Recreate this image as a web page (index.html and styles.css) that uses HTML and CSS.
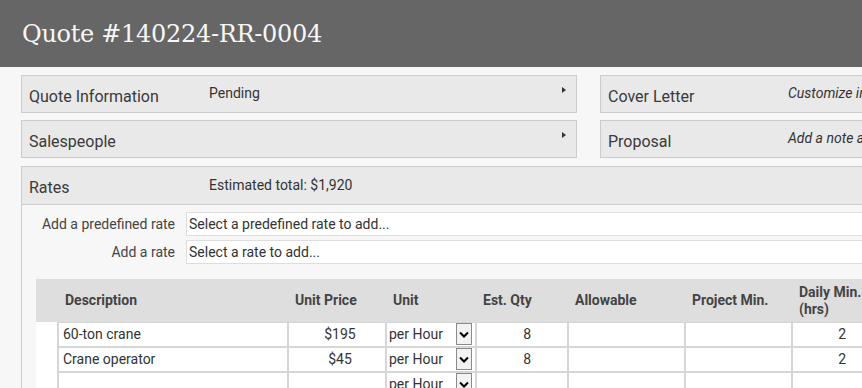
FILE: index.html
```html
<!DOCTYPE html>
<html lang="en">
<head>
  <meta charset="UTF-8" />
  <meta name="viewport" content="width=device-width, initial-scale=1.0" />
  <title>Quote #140224-RR-0004</title>
  <link rel="stylesheet" href="styles.css">
</head>
<body>
  <header class="page-header">
    <h1>Quote #140224-RR-0004</h1>
  </header>
  <div class="content">
    <!-- Summary panels -->
    <div class="summary">
      <div class="summary-col">
        <div class="panel">
          <span class="panel-title">Quote Information</span>
          <span class="panel-value">Pending</span>
          <span class="arrow"></span>
        </div>
        <div class="panel">
          <span class="panel-title">Salespeople</span>
          <span class="panel-value"></span>
          <span class="arrow"></span>
        </div>
      </div>
      <div class="summary-col">
        <div class="panel">
          <span class="panel-title">Cover Letter</span>
          <span class="panel-value hint">Customize introduction and closing</span>
          <span class="arrow"></span>
        </div>
        <div class="panel">
          <span class="panel-title">Proposal</span>
          <span class="panel-value hint">Add a note about this proposal</span>
          <span class="arrow"></span>
        </div>
      </div>
    </div>

    <!-- Rates -->
    <div class="rates">
      <div class="panel rates-head">
        <span class="panel-title">Rates</span>
        <span class="panel-value">Estimated total: $1,920</span>
      </div>
      <div class="rates-body">
        <div class="field-row">
          <label class="field-label">Add a predefined rate</label>
          <div class="field-input">Select a predefined rate to add...</div>
        </div>
        <div class="field-row">
          <label class="field-label">Add a rate</label>
          <div class="field-input">Select a rate to add...</div>
        </div>

        <table class="rate-table">
          <colgroup>
            <col class="c-gutter">
            <col class="c-desc">
            <col class="c-price">
            <col class="c-unit">
            <col class="c-qty">
            <col class="c-allow">
            <col class="c-pmin">
            <col class="c-dmin">
            <col class="c-total">
          </colgroup>
          <thead>
            <tr>
              <th></th>
              <th>Description</th>
              <th>Unit Price</th>
              <th>Unit</th>
              <th>Est. Qty</th>
              <th>Allowable</th>
              <th>Project Min.</th>
              <th>Daily Min.<br>(hrs)</th>
              <th>Total</th>
            </tr>
          </thead>
          <tbody>
            <tr>
              <td class="gutter"></td>
              <td>60-ton crane</td>
              <td class="center">$195</td>
              <td class="unit"><span>per Hour</span><span class="select-btn"><svg width="10" height="7" viewBox="0 0 10 7"><path d="M1 1.5l4 4 4-4" fill="none" stroke="#000" stroke-width="2"/></svg></span></td>
              <td class="num">8</td>
              <td></td>
              <td></td>
              <td class="num">2</td>
              <td class="num">$1,560</td>
            </tr>
            <tr>
              <td class="gutter"></td>
              <td>Crane operator</td>
              <td class="center">$45</td>
              <td class="unit"><span>per Hour</span><span class="select-btn"><svg width="10" height="7" viewBox="0 0 10 7"><path d="M1 1.5l4 4 4-4" fill="none" stroke="#000" stroke-width="2"/></svg></span></td>
              <td class="num">8</td>
              <td></td>
              <td></td>
              <td class="num">2</td>
              <td class="num">$360</td>
            </tr>
            <tr>
              <td class="gutter"></td>
              <td></td>
              <td class="center"></td>
              <td class="unit"><span>per Hour</span><span class="select-btn"><svg width="10" height="7" viewBox="0 0 10 7"><path d="M1 1.5l4 4 4-4" fill="none" stroke="#000" stroke-width="2"/></svg></span></td>
              <td class="num"></td>
              <td></td>
              <td></td>
              <td class="num"></td>
              <td class="num"></td>
            </tr>
          </tbody>
        </table>
      </div>
    </div>
  </div>
</body>
</html>
```

FILE: styles.css
```css
body {
  margin: 0;
  padding: 0;
  background: #f7f7f7;
  font-family: Roboto, "Liberation Sans", Arial, sans-serif;
  color: #333;
  overflow: hidden;
}
.page-header {
  background: #666;
  height: 67px;
  padding: 0 22px;
  display: flex;
  align-items: center;
}
.page-header h1 {
  margin: 0;
  font-family: "DejaVu Serif", "Liberation Serif", serif;
  font-weight: normal;
  font-size: 24px;
  color: #f7f7f7;
  letter-spacing: -0.3px;
}
.content {
  width: 1135px;
  padding: 8px 0 0 21px;
}
.summary {
  display: flex;
  gap: 23px;
}
.summary-col {
  flex: 1;
  display: flex;
  flex-direction: column;
  gap: 7px;
}
.panel {
  box-sizing: border-box;
  height: 38px;
  border: 1px solid #ccc;
  background: #e9e9e9;
  display: flex;
  align-items: center;
  padding-left: 7px;
}
.panel-title {
  width: 180px;
  flex-shrink: 0;
  font-size: 16px;
  color: #3a3a3a;
  padding-top: 4px;
}
.panel-value {
  flex: 1;
  font-size: 14px;
  color: #333;
  padding-bottom: 2px;
}
.panel-value.hint {
  font-style: italic;
}
.arrow {
  width: 0;
  height: 0;
  border-top: 3px solid transparent;
  border-bottom: 3px solid transparent;
  border-left: 4px solid #333;
  margin: 0 10px 8px 0;
}
.rates {
  margin-top: 8px;
}
.rates-head {
  height: 39px;
}
.rates-body {
  border-left: 1px solid #ccc;
  border-right: 1px solid #ccc;
  padding: 7px 14px 20px;
  background: #f7f7f7;
}
.field-row {
  display: flex;
  align-items: center;
  gap: 11px;
  margin-bottom: 4px;
}
.field-label {
  width: 139px;
  text-align: right;
  font-size: 14px;
  color: #444;
  white-space: nowrap;
}
.field-input {
  flex: 1;
  box-sizing: border-box;
  height: 24px;
  line-height: 22px;
  border: 1px solid #ddd;
  background: #fff;
  padding-left: 2px;
  font-size: 14px;
  color: #333;
}
.rate-table {
  margin-top: 15px;
  border-collapse: separate;
  border-spacing: 0;
  table-layout: fixed;
  width: 1000px;
  font-size: 14px;
}
.c-gutter { width: 22px; }
.c-desc { width: 230px; }
.c-price { width: 98px; }
.c-unit { width: 90px; }
.c-qty { width: 92px; }
.c-allow { width: 117px; }
.c-pmin { width: 107px; }
.c-dmin { width: 91px; }
.c-total { width: 153px; }
.rate-table th {
  background: #dedede;
  height: 43px;
  padding: 0 6px 0 7px;
  text-align: left;
  font-weight: bold;
  color: #444;
  line-height: 17px;
}
.rate-table td {
  background: #fff;
  border: 1px solid #d6d6d6;
  height: 23px;
  padding: 0 4px;
  line-height: 23px;
  color: #333;
  white-space: nowrap;
  overflow: hidden;
}
.rate-table td.gutter {
  border: none;
  border-right: 1px solid #d6d6d6;
}
.rate-table td.center {
  text-align: center;
  padding-left: 10px;
}
.rate-table td.num {
  text-align: right;
  padding-right: 36px;
}
.rate-table td.unit {
  padding: 0 3px 0 2px;
}
.select-btn {
  float: right;
  box-sizing: border-box;
  width: 16px;
  height: 22px;
  border: 1px solid #8a8a8a;
  background: #f2f2f2;
  display: flex;
  align-items: center;
  justify-content: center;
}
```
